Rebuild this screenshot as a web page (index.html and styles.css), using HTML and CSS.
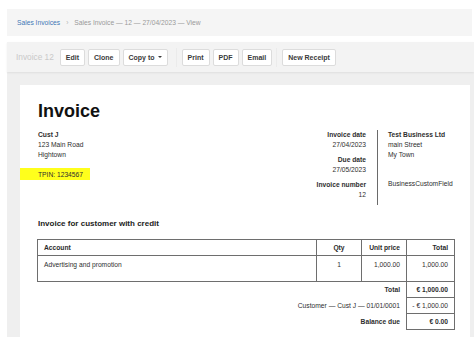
FILE: index.html
```html
<!DOCTYPE html>
<html lang="en">
<head>
    <meta charset="UTF-8">
    <meta name="viewport" content="width=device-width, initial-scale=1.0">
    <title>Sales Invoice — 12 — View</title>
    <link rel="stylesheet" href="styles.css">
</head>
<body>

    <div class="app">
        <div class="breadcrumb">
            <a href="#" class="crumb-link">Sales Invoices</a>
            <span class="crumb-sep">›</span>
            <span class="crumb-current">Sales Invoice — 12 — 27/04/2023 — View</span>
        </div>

        <div class="toolbar">
            <span class="doc-name">Invoice 12</span>
            <div class="btn-group">
                <button class="btn">Edit</button>
                <button class="btn">Clone</button>
                <button class="btn">Copy to <span class="caret"></span></button>
            </div>
            <div class="btn-group split">
                <button class="btn">Print</button>
                <button class="btn">PDF</button>
                <button class="btn">Email</button>
            </div>
            <div class="btn-group split narrow">
                <button class="btn">New Receipt</button>
            </div>
        </div>

        <div class="canvas">
            <div class="sheet">
                <h1 class="title">Invoice</h1>

                <div class="parties">
                    <div class="customer">
                        <div class="strong">Cust J</div>
                        <div>123 Main Road</div>
                        <div>Hightown</div>
                        <div class="tpin">TPIN: 1234567</div>
                    </div>

                    <div class="meta">
                        <div class="meta-item">
                            <div class="strong">Invoice date</div>
                            <div>27/04/2023</div>
                        </div>
                        <div class="meta-item">
                            <div class="strong">Due date</div>
                            <div>27/05/2023</div>
                        </div>
                        <div class="meta-item">
                            <div class="strong">Invoice number</div>
                            <div>12</div>
                        </div>
                    </div>

                    <div class="business">
                        <div class="strong">Test Business Ltd</div>
                        <div>main Street</div>
                        <div>My Town</div>
                        <div class="custom-field">BusinessCustomField</div>
                    </div>
                </div>

                <h2 class="subtitle">Invoice for customer with credit</h2>

                <table class="lines">
                    <colgroup>
                        <col class="col-account">
                        <col class="col-qty">
                        <col class="col-price">
                        <col class="col-total">
                    </colgroup>
                    <thead>
                        <tr>
                            <th class="left">Account</th>
                            <th class="center">Qty</th>
                            <th class="right">Unit price</th>
                            <th class="right">Total</th>
                        </tr>
                    </thead>
                    <tbody>
                        <tr class="item">
                            <td class="left">Advertising and promotion</td>
                            <td class="center">1</td>
                            <td class="right">1,000.00</td>
                            <td class="right">1,000.00</td>
                        </tr>
                        <tr class="sum">
                            <td colspan="3" class="label strong">Total</td>
                            <td class="value strong">€ 1,000.00</td>
                        </tr>
                        <tr class="sum">
                            <td colspan="3" class="label">Customer — Cust J — 01/01/0001</td>
                            <td class="value">- € 1,000.00</td>
                        </tr>
                        <tr class="sum">
                            <td colspan="3" class="label strong">Balance due</td>
                            <td class="value strong">€ 0.00</td>
                        </tr>
                    </tbody>
                </table>
            </div>
        </div>
    </div>

</body>
</html>
```

FILE: styles.css
```css
body {
    margin: 0;
    font-family: 'Liberation Sans', Arial, sans-serif;
    background-color: #ffffff;
    color: #333333;
}

.app {
    padding: 9px 0 0 7px;
}

/* Breadcrumb bar */
.breadcrumb {
    height: 27px;
    margin-right: 2px;
    padding-left: 10px;
    background-color: #f5f5f5;
    display: flex;
    align-items: center;
    font-size: 6.7px;
}

.crumb-link {
    color: #3f78b5;
    text-decoration: none;
}

.crumb-sep {
    color: #b5b5b5;
    margin: 0 6px 0 6px;
}

.crumb-current {
    color: #9a9a9a;
}

/* Toolbar */
.toolbar {
    margin-top: 6px;
    height: 30px;
    padding-left: 9px;
    background-color: #f3f3f3;
    display: flex;
    align-items: center;
    box-shadow: 0 1px 2px rgba(0, 0, 0, 0.07);
    position: relative;
}

.doc-name {
    font-size: 8.3px;
    color: #c9c9c9;
    margin-right: 6px;
}

.btn-group {
    display: flex;
    align-items: center;
    gap: 3px;
}

.btn-group.split {
    margin-left: 8px;
    padding-left: 5px;
    border-left: 1px solid #ebebeb;
    height: 19px;
}

.btn-group.narrow {
    margin-left: 4px;
}

.btn {
    height: 17px;
    padding: 0 5px;
    font-family: 'Liberation Sans', Arial, sans-serif;
    font-size: 7px;
    font-weight: bold;
    color: #3a3a3a;
    background-color: #ffffff;
    border: 1px solid #dcdcdc;
    border-radius: 2px;
    cursor: pointer;
    display: flex;
    align-items: center;
}

.caret {
    display: inline-block;
    width: 0;
    height: 0;
    margin-left: 3px;
    border-left: 2.5px solid transparent;
    border-right: 2.5px solid transparent;
    border-top: 2.5px solid #3a3a3a;
}

/* Grey canvas holding the printed sheet */
.canvas {
    background-color: #efefef;
    padding: 13px 4px 0 13px;
}

.sheet {
    background-color: #ffffff;
    padding: 15px 16px 7px 18px;
    font-size: 6.7px;
    color: #2e2e2e;
}

.strong {
    font-weight: bold;
}

.title {
    margin: 0;
    font-size: 18px;
    line-height: 22px;
    font-weight: bold;
    color: #111111;
}

/* Customer / invoice info / business */
.parties {
    margin-top: 8px;
    display: flex;
    line-height: 10px;
}

.customer {
    flex: 1;
}

.tpin {
    display: inline-block;
    margin: 8px 0 0 -18px;
    padding: 2px 7px 0 18px;
    background-color: #ffff1c;
}

.meta {
    width: 90px;
    text-align: right;
    padding: 0 11px 5px 0;
    border-right: 1px solid #6a6a6a;
}

.meta-item + .meta-item {
    margin-top: 5px;
}

.business {
    width: 76px;
    box-sizing: border-box;
    padding-left: 10px;
}

.custom-field {
    margin-top: 19px;
}

.subtitle {
    margin: 13px 0 9px;
    font-size: 8px;
    line-height: 12px;
    font-weight: bold;
    color: #222222;
}

/* Line items */
.lines {
    margin-left: -1px;
    width: 417px;
    table-layout: fixed;
    border-collapse: collapse;
    font-size: 6.7px;
    line-height: 9px;
}

.col-account { width: 279px; }
.col-qty { width: 45px; }
.col-price { width: 45px; }
.col-total { width: 48px; }

.lines th,
.lines td {
    border: 1px solid #6e6e6e;
    padding: 3px 6px;
    vertical-align: top;
    white-space: nowrap;
}

.lines th {
    font-weight: bold;
    color: #2a2a2a;
}

.lines .left { text-align: left; }
.lines .center { text-align: center; }
.lines .right { text-align: right; }

.lines .item td {
    padding-top: 4px;
    padding-bottom: 12px;
}

.lines .sum .label {
    border: none;
    text-align: right;
}

.lines .sum .value {
    text-align: right;
    padding-left: 2px;
}
```
